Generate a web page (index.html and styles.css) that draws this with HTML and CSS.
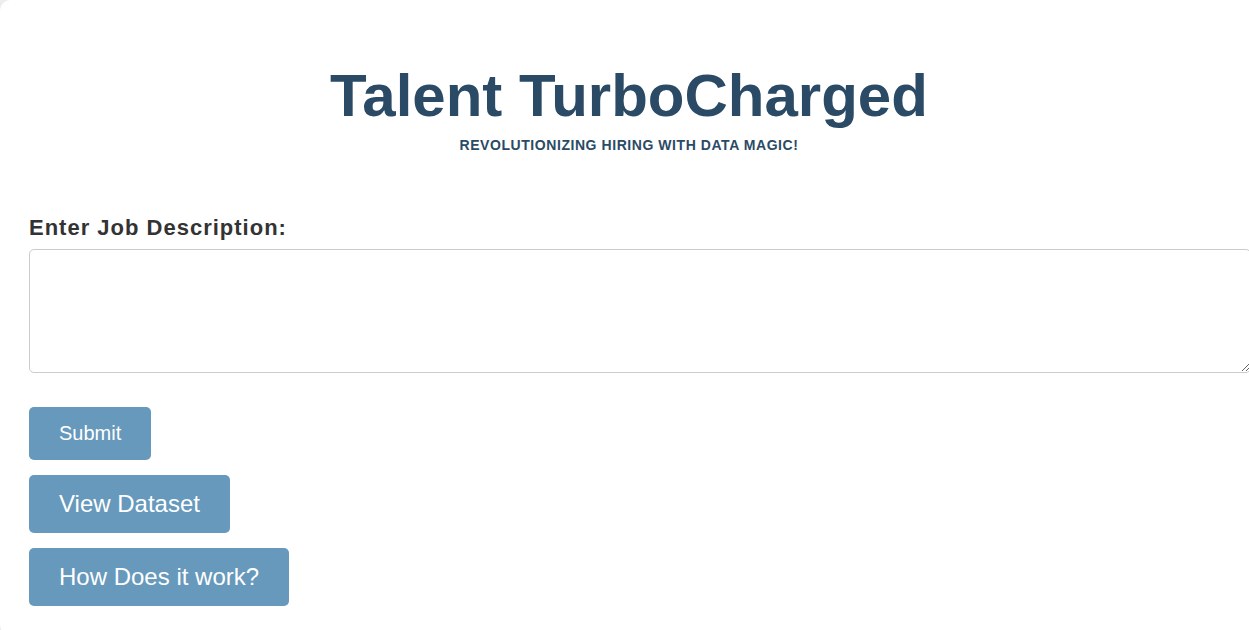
FILE: index.html
```html
<!DOCTYPE html>
<html lang="en">
<head>
<meta charset="utf-8">
<title>Talent TurboCharged</title>
<link rel="stylesheet" href="styles.css">
</head>
<body>
<main class="card">
  <header class="hero">
    <h1 class="title">Talent TurboCharged</h1>
    <p class="tagline">Revolutionizing hiring with data magic!</p>
  </header>
  <form class="job-form">
    <label class="field-label" for="jd">Enter Job Description:</label>
    <textarea id="jd" class="field-input"></textarea>
    <div class="actions">
      <button type="button" class="btn btn-sm">Submit</button>
      <button type="button" class="btn">View Dataset</button>
      <button type="button" class="btn">How Does it work?</button>
    </div>
  </form>
</main>
</body>
</html>
```

FILE: styles.css
```css
html, body {
  margin: 0;
  padding: 0;
  overflow: hidden;
  background: #f2f2f2;
}

body {
  font-family: "Liberation Sans", Arial, sans-serif;
}

.card {
  box-sizing: border-box;
  width: 1258px;
  min-height: 632px;
  background: #ffffff;
  border-radius: 10px;
  box-shadow: 0 0 8px rgba(0, 0, 0, 0.08);
  padding: 0 29px 29px;
}

.hero {
  text-align: center;
  padding-top: 61px;
}

.title {
  margin: 0;
  font-size: 60px;
  line-height: 69px;
  font-weight: 700;
  color: #2b4a65;
}

.tagline {
  margin: 7px 0 0;
  font-size: 14px;
  line-height: 16px;
  font-weight: 700;
  letter-spacing: 0.56px;
  text-transform: uppercase;
  color: #2b4a65;
}

.job-form {
  display: flex;
  flex-direction: column;
  align-items: flex-start;
  margin-top: 62px;
}

.field-label {
  font-size: 22px;
  line-height: 25px;
  font-weight: 700;
  letter-spacing: 1px;
  color: #333333;
}

.field-input {
  box-sizing: content-box;
  width: 100%;
  height: 102px;
  margin: 9px 0 0;
  padding: 10px;
  border: 1px solid #cccccc;
  border-radius: 5px;
  font-family: inherit;
  font-size: 16px;
  background: #ffffff;
}

.actions {
  display: flex;
  flex-direction: column;
  align-items: flex-start;
  gap: 15px;
  margin-top: 34px;
}

.btn {
  border: none;
  border-radius: 5px;
  background: #6699bb;
  color: #ffffff;
  font-family: inherit;
  font-size: 24px;
  line-height: 28px;
  padding: 15px 30px;
  cursor: pointer;
}

.btn-sm {
  font-size: 20px;
  line-height: 23px;
}
```
